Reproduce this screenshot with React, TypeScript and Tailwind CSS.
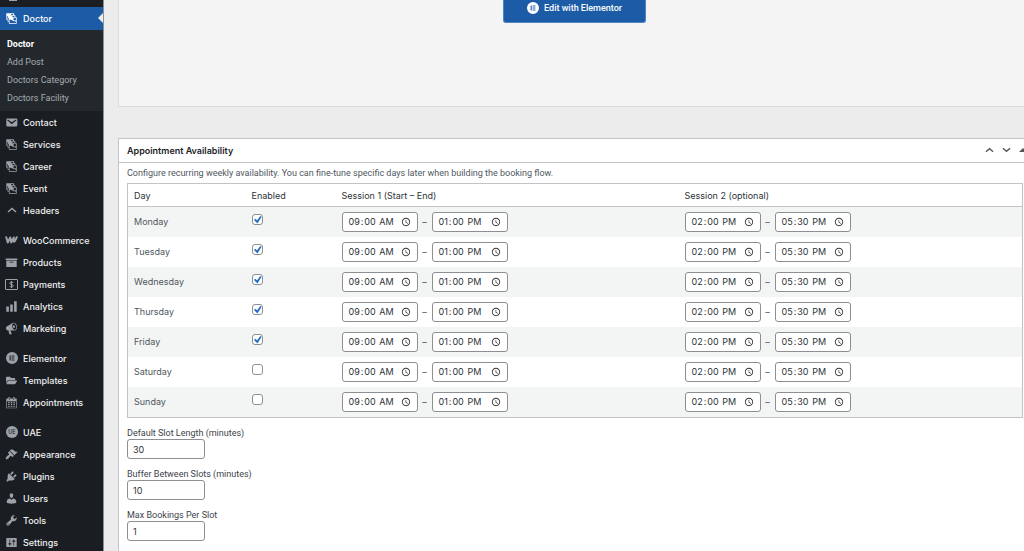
import type { ReactNode } from 'react';
import { FaFolderOpen } from 'react-icons/fa';

type NavItem = { label: string; icon: ReactNode };

const ICONS = {
  posts:
    'M4 15v-3H2V2h12v3h2v3h2v10H6v-3H4zm7-12c-1.1 0-2 .9-2 2h4c0-1.1-.89-2-2-2zm-7 8V6H3v5h1zm7-3h4c0-1.1-.89-2-2-2-1.1 0-2 .9-2 2zm-5 6V9H5v5h1zm9-1c1.1 0 2-.89 2-2 0-1.1-.9-2-2-2s-2 .9-2 2c0 1.11.9 2 2 2zm2 4v-2c-5 0-5-3-10-3v5h10z',
  email:
    'M3.87 4h13.25C18.37 4 19 4.59 19 5.79v8.42c0 1.19-.63 1.79-1.88 1.79H3.87c-1.25 0-1.88-.6-1.88-1.79V5.79c0-1.2.63-1.79 1.88-1.79zm6.62 8.6l6.74-5.53c.24-.2.43-.66.13-1.07-.29-.41-.82-.42-1.17-.17l-5.7 3.86L4.8 5.83c-.35-.25-.88-.24-1.17.17-.3.41-.11.87.13 1.07z',
  archive: 'M19 4v2H1V4h18zM2 7h16v10H2V7zm11 3V9H7v1h6z',
  chart: 'M18 18V2h-4v16h4zm-6 0V7H8v11h4zm-6 0v-8H2v8h4z',
  megaphone:
    'M18.15 5.94c.46 1.62.38 3.22-.02 4.48-.42 1.28-1.26 2.18-2.3 2.48-.16.06-.26.06-.4.06-.06.02-.12.02-.18.02-.06.02-.14.02-.22.02h-6.8l2.22 5.5c.02.14-.06.26-.14.34-.08.1-.24.16-.34.16H6.95c-.1 0-.26-.06-.34-.16-.08-.08-.16-.2-.14-.34l-1-5.5H4.25l-.02-.02c-.5.06-1.08-.18-1.54-.62s-.88-1.08-1.06-1.88c-.24-.8-.2-1.56-.02-2.2.18-.62.58-1.08 1.06-1.3l.02-.02 9-5.4c.1-.06.18-.1.24-.16.06-.04.14-.08.24-.12.16-.08.28-.12.5-.18 1.04-.3 2.24.1 3.22.98s1.84 2.24 2.26 3.86zm-2.58 5.98h-.02c.4-.1.74-.34 1.04-.7.58-.7.86-1.76.86-3.04 0-.64-.1-1.3-.28-1.98-.34-1.36-1.02-2.5-1.78-3.24s-1.68-1.1-2.46-.88c-.82.22-1.4.96-1.7 2-.32 1.04-.28 2.36.06 3.72.38 1.36 1 2.5 1.8 3.24.78.74 1.62 1.1 2.48.88zm-2.54-7.08c.22-.04.42-.02.62.04.38.16.76.48 1.02 1s.42 1.2.42 1.78c0 .3-.04.56-.12.8-.18.48-.44.84-.86.94-.34.1-.8-.06-1.14-.4s-.64-.86-.78-1.5c-.18-.62-.12-1.24.02-1.72s.48-.84.82-.94z',
  calendar:
    'M15 4h3v15H2V4h3V3c0-.41.15-.76.44-1.06.29-.29.65-.44 1.06-.44s.77.15 1.06.44c.29.3.44.65.44 1.06v1h4V3c0-.41.15-.76.44-1.06.29-.29.65-.44 1.06-.44s.77.15 1.06.44c.29.3.44.65.44 1.06v1zM6 3v2.5c0 .14.05.26.15.36.09.09.21.14.35.14s.26-.05.35-.14c.1-.1.15-.22.15-.36V3c0-.14-.05-.26-.15-.35-.09-.1-.21-.15-.35-.15s-.26.05-.35.15c-.1.09-.15.21-.15.35zm7 0v2.5c0 .14.05.26.14.36.1.09.22.14.36.14s.26-.05.36-.14c.09-.1.14-.22.14-.36V3c0-.14-.05-.26-.14-.35-.1-.1-.22-.15-.36-.15s-.26.05-.36.15c-.09.09-.14.21-.14.35zm4 15V8H3v10h14zM7 9v2H5V9h2zm2 0h2v2H9V9zm4 2V9h2v2h-2zm-6 1v2H5v-2h2zm2 0h2v2H9v-2zm4 2v-2h2v2h-2zm-6 1v2H5v-2h2zm4 2H9v-2h2v2zm4 0h-2v-2h2v2z',
  appearance:
    'M14.48 11.06L7.41 3.99l1.5-1.5c.5-.56 2.3-.47 3.51.32 1.21.8 1.43 1.28 2.91 2.1 1.18.64 2.45 1.26 4.45.85zm-.71.71L6.7 4.7 4.93 6.47c-.39.39-.39 1.02 0 1.41l1.06 1.06c.39.39.39 1.03 0 1.42-.6.6-1.43 1.11-2.21 1.69-.35.26-.7.53-1.01.84C1.43 14.23.4 16.08 1.4 17.07c.99 1 2.84-.03 4.18-1.36.31-.31.58-.66.85-1.02.57-.78 1.08-1.61 1.69-2.21.39-.39 1.02-.39 1.41 0l1.06 1.06c.39.39 1.02.39 1.41 0z',
  plugins:
    'M13.11 4.36L9.87 7.6 8 5.73l3.24-3.24c.35-.34 1.05-.2 1.56.32.52.51.66 1.21.31 1.55zm-8 1.77l.91-1.12 9.01 9.01-1.19.84c-.71.71-2.63 1.16-3.82 1.16H6.14L4.9 17.26c-.59.59-1.54.59-2.12 0-.59-.58-.59-1.53 0-2.12l1.24-1.24v-3.88c0-1.13.4-3.19 1.09-3.89zm7.26 3.97l3.24-3.24c.34-.35 1.04-.21 1.55.31.52.51.66 1.21.31 1.55l-3.24 3.25z',
  users:
    'M10 9.25c-2.27 0-2.73-3.44-2.73-3.44C7 4.02 7.82 2 9.97 2c2.16 0 2.98 2.02 2.71 3.81 0 0-.41 3.44-2.68 3.44zm0 2.57L12.72 10c2.39 0 4.52 2.33 4.52 4.53v2.49s-3.65 1.13-7.24 1.13c-3.65 0-7.24-1.13-7.24-1.13v-2.49c0-2.25 1.94-4.48 4.47-4.48z',
  tools:
    'M16.68 9.77c-1.34 1.34-3.3 1.67-4.95.99l-5.41 6.52c-.99.99-2.59.99-3.58 0s-.99-2.59 0-3.57l6.52-5.42c-.68-1.65-.35-3.61.99-4.95 1.28-1.28 3.12-1.62 4.72-1.06l-2.89 2.89 2.82 2.82 2.86-2.87c.53 1.58.18 3.39-1.08 4.65zM3.81 16.21c.4.39 1.04.39 1.43 0 .4-.4.4-1.04 0-1.43-.39-.4-1.03-.4-1.43 0-.39.39-.39 1.03 0 1.43z',
  settings:
    'M18 16V4c0-.55-.45-1-1-1H3c-.55 0-1 .45-1 1v12c0 .55.45 1 1 1h14c.55 0 1-.45 1-1zM8 11h1c.55 0 1 .45 1 1s-.45 1-1 1H8v1.5c0 .28-.22.5-.5.5s-.5-.22-.5-.5V13H6c-.55 0-1-.45-1-1s.45-1 1-1h1V5.5c0-.28.22-.5.5-.5s.5.22.5.5V11zm5-2h-1c-.55 0-1-.45-1-1s.45-1 1-1h1V5.5c0-.28.22-.5.5-.5s.5.22.5.5V7h1c.55 0 1 .45 1 1s-.45 1-1 1h-1v5.5c0 .28-.22.5-.5.5s-.5-.22-.5-.5V9z',
};

function Dash({ name }: { name: keyof typeof ICONS }) {
  return (
    <svg viewBox="0 0 20 20" className="h-[13px] w-[13px]" fill="currentColor" aria-hidden>
      <path d={ICONS[name]} />
    </svg>
  );
}

function ElementorIcon({ className }: { className: string }) {
  return (
    <svg viewBox="0 0 20 20" className={className} fill="currentColor" aria-hidden>
      <path
        fillRule="evenodd"
        d="M10 0a10 10 0 1 1 0 20 10 10 0 0 1 0-20zM6 5.8v8.4h1.8V5.8zM9.3 5.8v1.8H14V5.8zM9.3 9.1v1.8H14V9.1zM9.3 12.4v1.8H14v-1.8z"
      />
    </svg>
  );
}

function WooIcon() {
  return (
    <svg
      viewBox="0 0 26 16"
      className="h-2 w-[13px]"
      fill="none"
      stroke="currentColor"
      strokeWidth="4"
      strokeLinejoin="round"
      strokeLinecap="round"
      aria-hidden
    >
      <path d="M2.5 2.5L5.500 13l5-10 2 10 5-10v7q.5 5 6-7.500" />
    </svg>
  );
}

function PaymentsIcon() {
  return (
    <svg
      viewBox="0 0 26 22"
      className="h-[11px] w-[13px]"
      fill="none"
      stroke="currentColor"
      strokeWidth="2"
      aria-hidden
    >
      <rect x="1" y="1" width="24" height="20" rx="1" />
      <path d="M16.500 8c-.5-1.500-2-2-3.500-2-2 0-3.500 1-3.500 2.500 0 3.500 7 1.500 7 5 0 1.500-1.500 2.500-3.500 2.500-1.500 0-3-.5-3.500-2M13 4v14" />
    </svg>
  );
}

function UaeIcon() {
  return (
    <svg viewBox="0 0 24 24" className="h-3 w-3" aria-hidden>
      <circle cx="12" cy="12" r="12" fill="#9ca2a7" />
      <text x="12" y="16" textAnchor="middle" fontSize="11" fontWeight="700" fill="#3c4854">
        UE
      </text>
    </svg>
  );
}

function Chevron({ down = false, className }: { down?: boolean; className: string }) {
  return (
    <svg viewBox="0 0 20 12" className={className} fill="none" stroke="currentColor" strokeWidth="3" aria-hidden>
      <path d={down ? 'M2 2l8 7 8-7' : 'M2 10l8-7 8 7'} />
    </svg>
  );
}

const groups: NavItem[][] = [
  [
    { label: 'Contact', icon: <Dash name="email" /> },
    { label: 'Services', icon: <Dash name="posts" /> },
    { label: 'Career', icon: <Dash name="posts" /> },
    { label: 'Event', icon: <Dash name="posts" /> },
    { label: 'Headers', icon: <Chevron className="h-[6px] w-[10px]" /> },
  ],
  [
    { label: 'WooCommerce', icon: <WooIcon /> },
    { label: 'Products', icon: <Dash name="archive" /> },
    { label: 'Payments', icon: <PaymentsIcon /> },
    { label: 'Analytics', icon: <Dash name="chart" /> },
    { label: 'Marketing', icon: <Dash name="megaphone" /> },
  ],
  [
    { label: 'Elementor', icon: <ElementorIcon className="h-3 w-3" /> },
    { label: 'Templates', icon: <FaFolderOpen className="h-[11px] w-[11px]" /> },
    { label: 'Appointments', icon: <Dash name="calendar" /> },
  ],
  [
    { label: 'UAE', icon: <UaeIcon /> },
    { label: 'Appearance', icon: <Dash name="appearance" /> },
    { label: 'Plugins', icon: <Dash name="plugins" /> },
    { label: 'Users', icon: <Dash name="users" /> },
    { label: 'Tools', icon: <Dash name="tools" /> },
    { label: 'Settings', icon: <Dash name="settings" /> },
  ],
];

const submenu = ['Doctor', 'Add Post', 'Doctors Category', 'Doctors Facility'];

const days = [
  { name: 'Monday', enabled: true },
  { name: 'Tuesday', enabled: true },
  { name: 'Wednesday', enabled: true },
  { name: 'Thursday', enabled: true },
  { name: 'Friday', enabled: true },
  { name: 'Saturday', enabled: false },
  { name: 'Sunday', enabled: false },
];

const slotFields = [
  { id: 'slot-length', label: 'Default Slot Length (minutes)', value: 30 },
  { id: 'slot-buffer', label: 'Buffer Between Slots (minutes)', value: 10 },
  { id: 'slot-max', label: 'Max Bookings Per Slot', value: 1 },
];

function Sidebar() {
  return (
    <nav className="w-[104px] shrink-0 border-r border-[#8c8f94] bg-[#1a1d21] text-[9px] text-[#f0f0f1]">
      <div className="flex h-[7px] items-start overflow-hidden pl-2 text-[#9ca2a7]">
        <span className="ml-px h-px w-2 bg-current" />
      </div>
      <a href="#doctor" className="relative flex h-[23px] items-center bg-[#1c5ba5] pb-px font-medium text-white">
        <span className="flex w-[23px] justify-center">
          <Dash name="posts" />
        </span>
        Doctor
        <span className="absolute right-0 border-y-5 border-r-5 border-y-transparent border-r-[#ececec]" />
      </a>
      <ul className="bg-[#23282d] pt-[5px] pb-1">
        {submenu.map((label, i) => (
          <li key={label}>
            <a
              href="#sub"
              className={`flex h-[18px] items-center pl-[7px] font-[Roboto,sans-serif] ${i === 0 ? 'font-bold text-white' : 'text-[#a7abb0]'}`}
            >
              {label}
            </a>
          </li>
        ))}
      </ul>
      <div className="flex flex-col gap-2">
        {groups.map((items, i) => (
          <ul key={i}>
            {items.map((item) => (
              <li key={item.label}>
                <a href="#menu" className="flex h-[22px] items-center font-medium">
                  <span className="flex w-[23px] justify-center text-[#9ca2a7]">{item.icon}</span>
                  {item.label}
                </a>
              </li>
            ))}
          </ul>
        ))}
      </div>
    </nav>
  );
}

function TimeInput({ label, value }: { label: string; value: string }) {
  return (
    <input
      type="time"
      aria-label={label}
      defaultValue={value}
      className="h-5 w-[76px] rounded-[3px] border border-[#8c8f94] bg-white pr-[3px] pl-[5px] text-[9px] text-[#2c3338] [&::-webkit-calendar-picker-indicator]:ml-[3px] [&::-webkit-calendar-picker-indicator]:h-[10px] [&::-webkit-calendar-picker-indicator]:w-[10px] [&::-webkit-calendar-picker-indicator]:opacity-80"
    />
  );
}

function Session({ day, start, end }: { day: string; start: string; end: string }) {
  return (
    <div className="flex items-center">
      <TimeInput label={`${day} start`} value={start} />
      <span className="w-[14px] text-center">–</span>
      <TimeInput label={`${day} end`} value={end} />
    </div>
  );
}

function Checkbox({ label, checked }: { label: string; checked: boolean }) {
  return (
    <span className="relative mt-[7px] block h-[11px] w-[11px]">
      <input
        type="checkbox"
        aria-label={label}
        defaultChecked={checked}
        className="peer block h-[11px] w-[11px] appearance-none rounded-[3px] border border-[#8c8f94] bg-white"
      />
      <svg
        viewBox="0 0 20 20"
        className="pointer-events-none absolute inset-0 hidden h-[11px] w-[11px] peer-checked:block"
        fill="#2a70c2"
        aria-hidden
      >
        <path d="M15 3.500l2.600 1.600-7.600 12-6.400-6 2-2.600 3.800 3z" />
      </svg>
    </span>
  );
}

function AvailabilityTable() {
  return (
    <table className="w-full table-fixed border-collapse border border-[#c3c4c7] text-left text-[9px] text-[#50575e]">
      <colgroup>
        <col className="w-[118px]" />
        <col className="w-[90px]" />
        <col className="w-[343px]" />
        <col />
      </colgroup>
      <thead>
        <tr className="h-[23px] border-b border-[#c3c4c7] text-[#2c3338]">
          <th className="px-[6px] font-normal">Day</th>
          <th className="px-[6px] font-normal">Enabled</th>
          <th className="px-[6px] font-normal">Session 1 (Start – End)</th>
          <th className="px-[6px] font-normal">Session 2 (optional)</th>
        </tr>
      </thead>
      <tbody>
        {days.map((day) => (
          <tr key={day.name} className="h-[30px] last:h-[31px] odd:bg-[#f3f4f4]">
            <td className="px-[6px]">{day.name}</td>
            <td className="px-[6px] align-top">
              <Checkbox label={`${day.name} enabled`} checked={day.enabled} />
            </td>
            <td className="px-[6px]">
              <Session day={day.name} start="09:00" end="13:00" />
            </td>
            <td className="px-[6px]">
              <Session day={day.name} start="14:00" end="17:30" />
            </td>
          </tr>
        ))}
      </tbody>
    </table>
  );
}

export default function App() {
  return (
    <div className="flex h-screen overflow-hidden bg-[#ececec] font-[Inter,'Liberation_Sans',sans-serif] leading-none">
      <Sidebar />
      <main className="flex min-w-0 flex-1 flex-col pl-[14px]">
        <section className="flex h-[107px] shrink-0 items-start justify-center border-b border-l border-[#dcdcde] bg-[#f4f4f4] pl-[6px]">
          <button
            type="button"
            className="flex h-[23px] w-[143px] items-center justify-center gap-[5px] rounded-b-[3px] border border-t-0 border-[#4f87c4] bg-[#1c5ba5] pb-[6px] font-[Roboto,sans-serif] text-[9px] font-medium text-white"
          >
            <ElementorIcon className="h-3 w-3" />
            Edit with Elementor
          </button>
        </section>

        <section className="mt-[31px] flex-1 border-t border-l border-[#c3c4c7] bg-white">
          <header className="flex h-6 items-center border-b border-[#c3c4c7] pb-px pl-2 text-[#50575e]">
            <h2 className="flex-1 text-[9px] font-semibold text-[#1d2327]">Appointment Availability</h2>
            <div className="flex items-center gap-2">
              <button type="button" aria-label="Move up">
                <Chevron className="h-[6px] w-[9px]" />
              </button>
              <button type="button" aria-label="Move down">
                <Chevron down className="h-[6px] w-[9px]" />
              </button>
              <button type="button" aria-label="Toggle panel" className="w-[5px] overflow-hidden">
                <span className="block w-0 border-x-4 border-b-4 border-x-transparent border-b-[#50575e]" />
              </button>
            </div>
          </header>
          <div className="pl-2">
            <p className="flex h-5 items-center font-[Roboto,sans-serif] text-[9px] text-[#50575e]">
              Configure recurring weekly availability. You can fine-tune specific days later when building the booking
              flow.
            </p>
            <div className="pr-px">
              <AvailabilityTable />
            </div>
            <div className="mt-[9px] flex flex-col items-start gap-[9px]">
              {slotFields.map((field) => (
                <div key={field.id} className="flex flex-col">
                  <label
                    htmlFor={field.id}
                    className="flex h-3 items-center font-[Roboto,sans-serif] text-[9px] text-[#3c434a]"
                  >
                    {field.label}
                  </label>
                  <input
                    id={field.id}
                    type="number"
                    defaultValue={field.value}
                    className="h-5 w-[78px] rounded-[3px] border border-[#8c8f94] bg-white px-[5px] text-[9px] text-[#2c3338]"
                  />
                </div>
              ))}
            </div>
          </div>
        </section>
      </main>
    </div>
  );
}
